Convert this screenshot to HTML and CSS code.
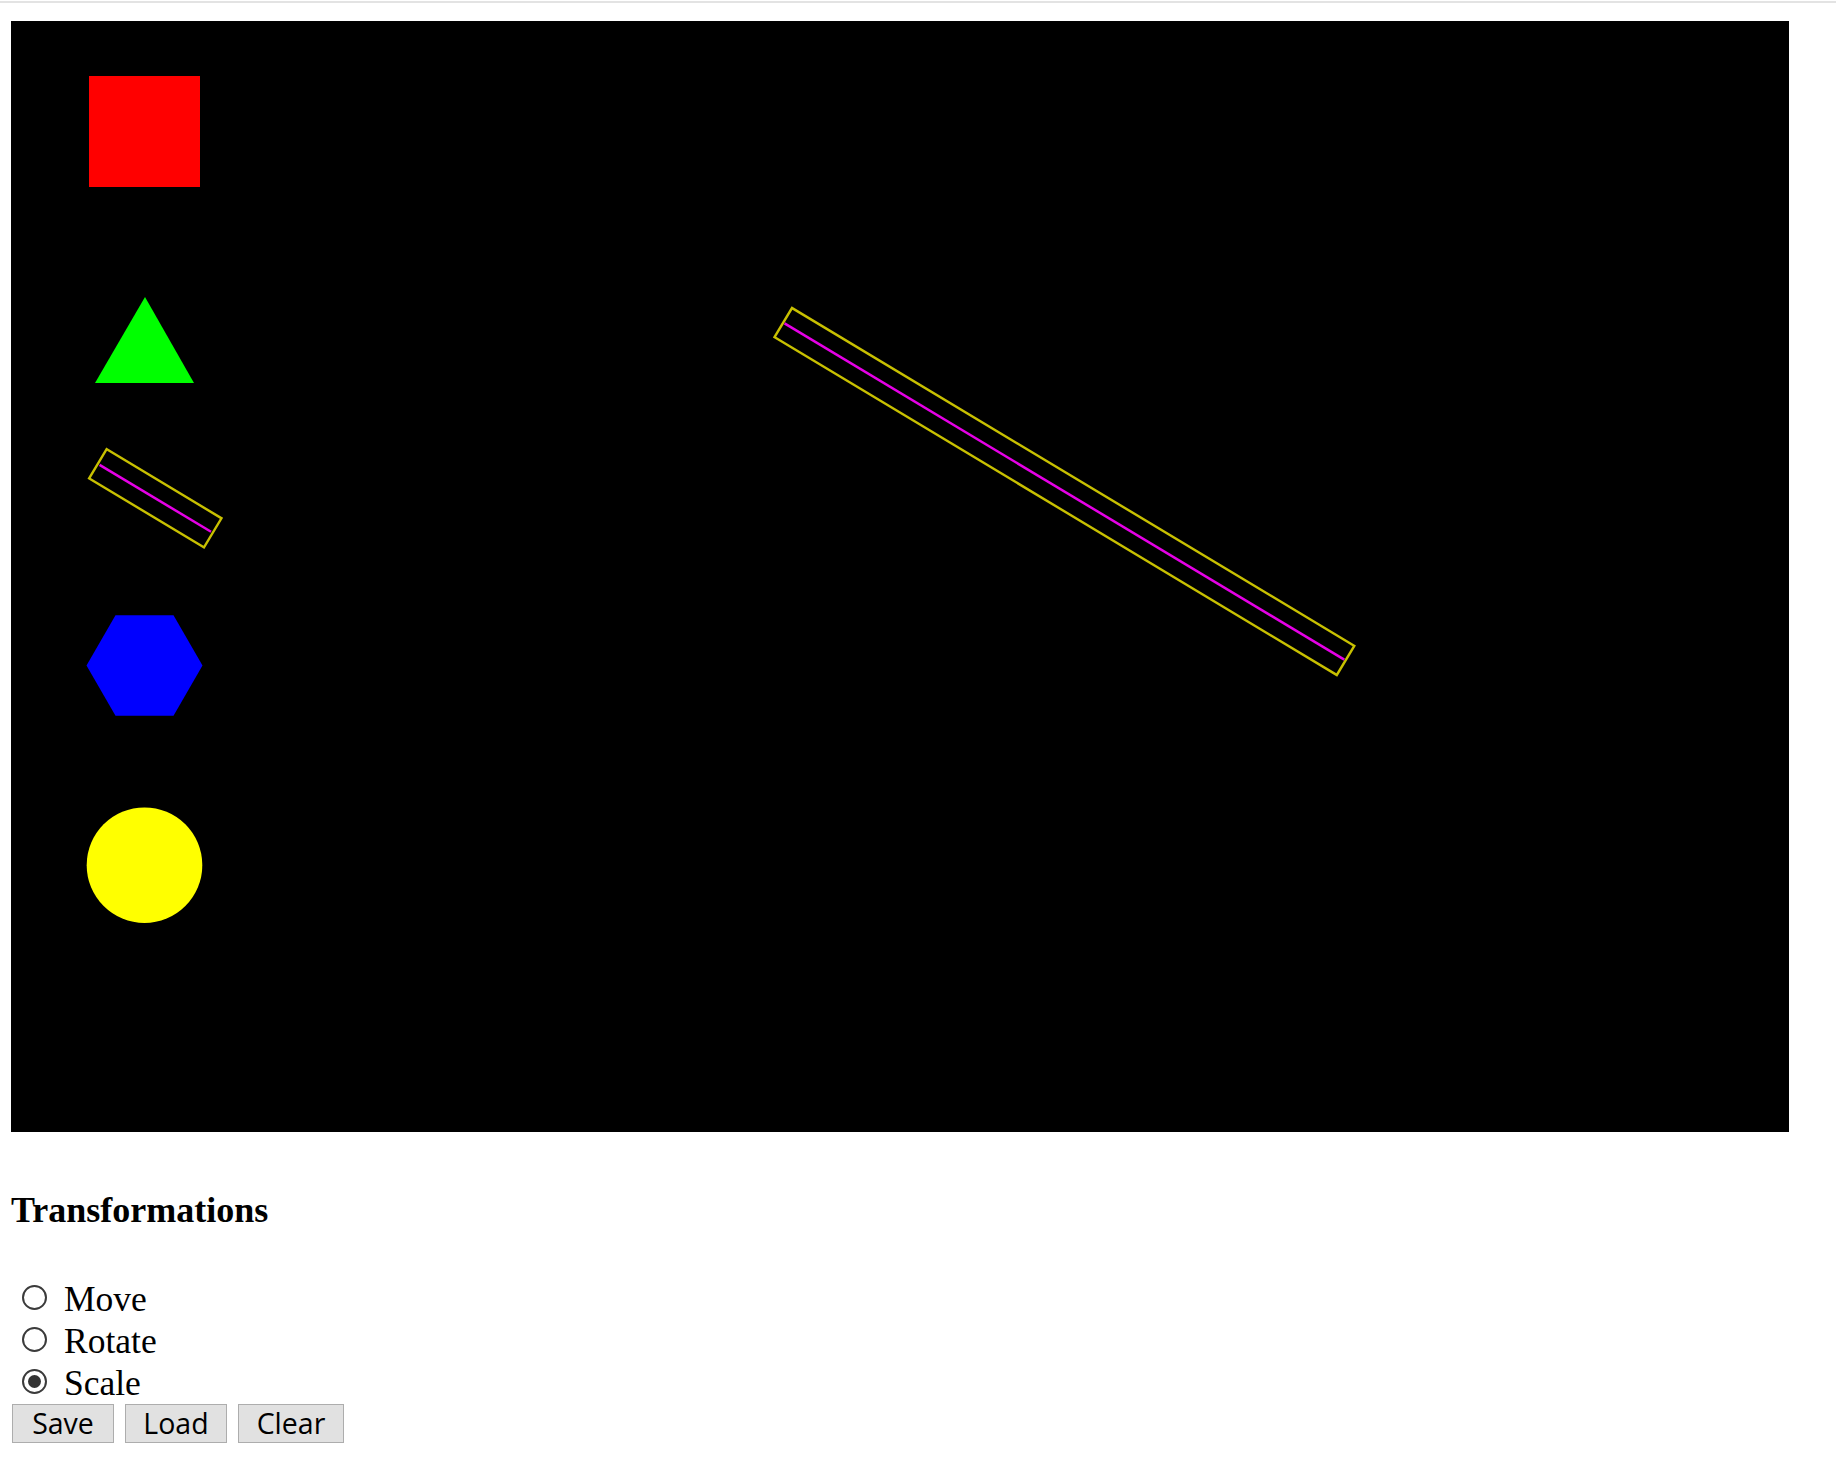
FILE: index.html
```html
<!DOCTYPE html>
<html>
<head>
<meta charset="utf-8">
<title>Transformations</title>
<link rel="stylesheet" href="styles.css">
</head>
<body>
<div class="topline"></div>
<svg class="canvas" width="1778" height="1111" viewBox="11 21 1778 1111" xmlns="http://www.w3.org/2000/svg">
  <rect x="89" y="76" width="111" height="111" fill="#ff0000"/>
  <polygon points="145,297 95,383 194,383" fill="#00ff00"/>
  <g transform="translate(155.3 498.3) rotate(31)">
    <rect x="-67" y="-17" width="134" height="34" fill="none" stroke="#c8c000" stroke-width="2.4"/>
    <line x1="-65" y1="0" x2="65" y2="0" stroke="#e600e6" stroke-width="2.5"/>
  </g>
  <polygon points="202.5,665.5 173.5,715.7 115.5,715.7 86.5,665.5 115.5,615.3 173.5,615.3" fill="#0000ff"/>
  <circle cx="144.5" cy="865.2" r="57.8" fill="#ffff00"/>
  <g transform="translate(1064.4 491.5) rotate(31)">
    <rect x="-328" y="-17" width="656" height="34" fill="none" stroke="#c8c000" stroke-width="2.4"/>
    <line x1="-326.5" y1="0" x2="326.5" y2="0" stroke="#e600e6" stroke-width="2.5"/>
  </g>
</svg>
<h4 class="title">Transformations</h4>
<div class="options">
  <label class="option"><input type="radio" name="mode" class="radio"><span>Move</span></label>
  <label class="option"><input type="radio" name="mode" class="radio"><span>Rotate</span></label>
  <label class="option"><input type="radio" name="mode" class="radio" checked><span>Scale</span></label>
</div>
<div class="buttons">
  <button class="btn btn-save">Save</button>
  <button class="btn btn-load">Load</button>
  <button class="btn btn-clear">Clear</button>
</div>
</body>
</html>
```
FILE: styles.css
```css
html, body {
  margin: 0;
  padding: 0;
  background: #ffffff;
}
body {
  padding-top: 1px;
  font-family: "Liberation Serif", "Times New Roman", serif;
  color: #000;
}
.topline {
  height: 2px;
  background: #e3e3e3;
}
.canvas {
  display: block;
  margin: 18px 0 0 11px;
  width: 1778px;
  height: 1111px;
  background: #000;
}
.title {
  margin: 58px 0 0 11px;
  font-size: 36px;
  line-height: 40px;
  font-weight: 700;
}
.options {
  margin-top: 47.6px;
  display: flex;
  flex-direction: column;
}
.option {
  display: flex;
  align-items: center;
  height: 42px;
  font-size: 35.5px;
  line-height: 42px;
}
.radio {
  appearance: none;
  -webkit-appearance: none;
  box-sizing: border-box;
  width: 25px;
  height: 25px;
  margin: -2px 17px 0 22px;
  border: 2px solid #3b3b3b;
  border-radius: 50%;
  background: #fff;
  display: grid;
  place-items: center;
}
.radio:checked::after {
  content: "";
  width: 13px;
  height: 13px;
  border-radius: 50%;
  background: #333;
}
.buttons {
  margin: 0.5px 0 0 12px;
  display: flex;
  gap: 11px;
}
.btn {
  box-sizing: border-box;
  height: 39px;
  padding: 0;
  border: 1px solid #adadad;
  background: #e1e1e1;
  font-family: "Open Sans", "Liberation Sans", sans-serif;
  font-size: 28.5px;
  line-height: 1;
  color: #000;
  display: flex;
  align-items: center;
  justify-content: center;
}
.btn-save, .btn-load { width: 102px; }
.btn-clear { width: 106px; }
```
